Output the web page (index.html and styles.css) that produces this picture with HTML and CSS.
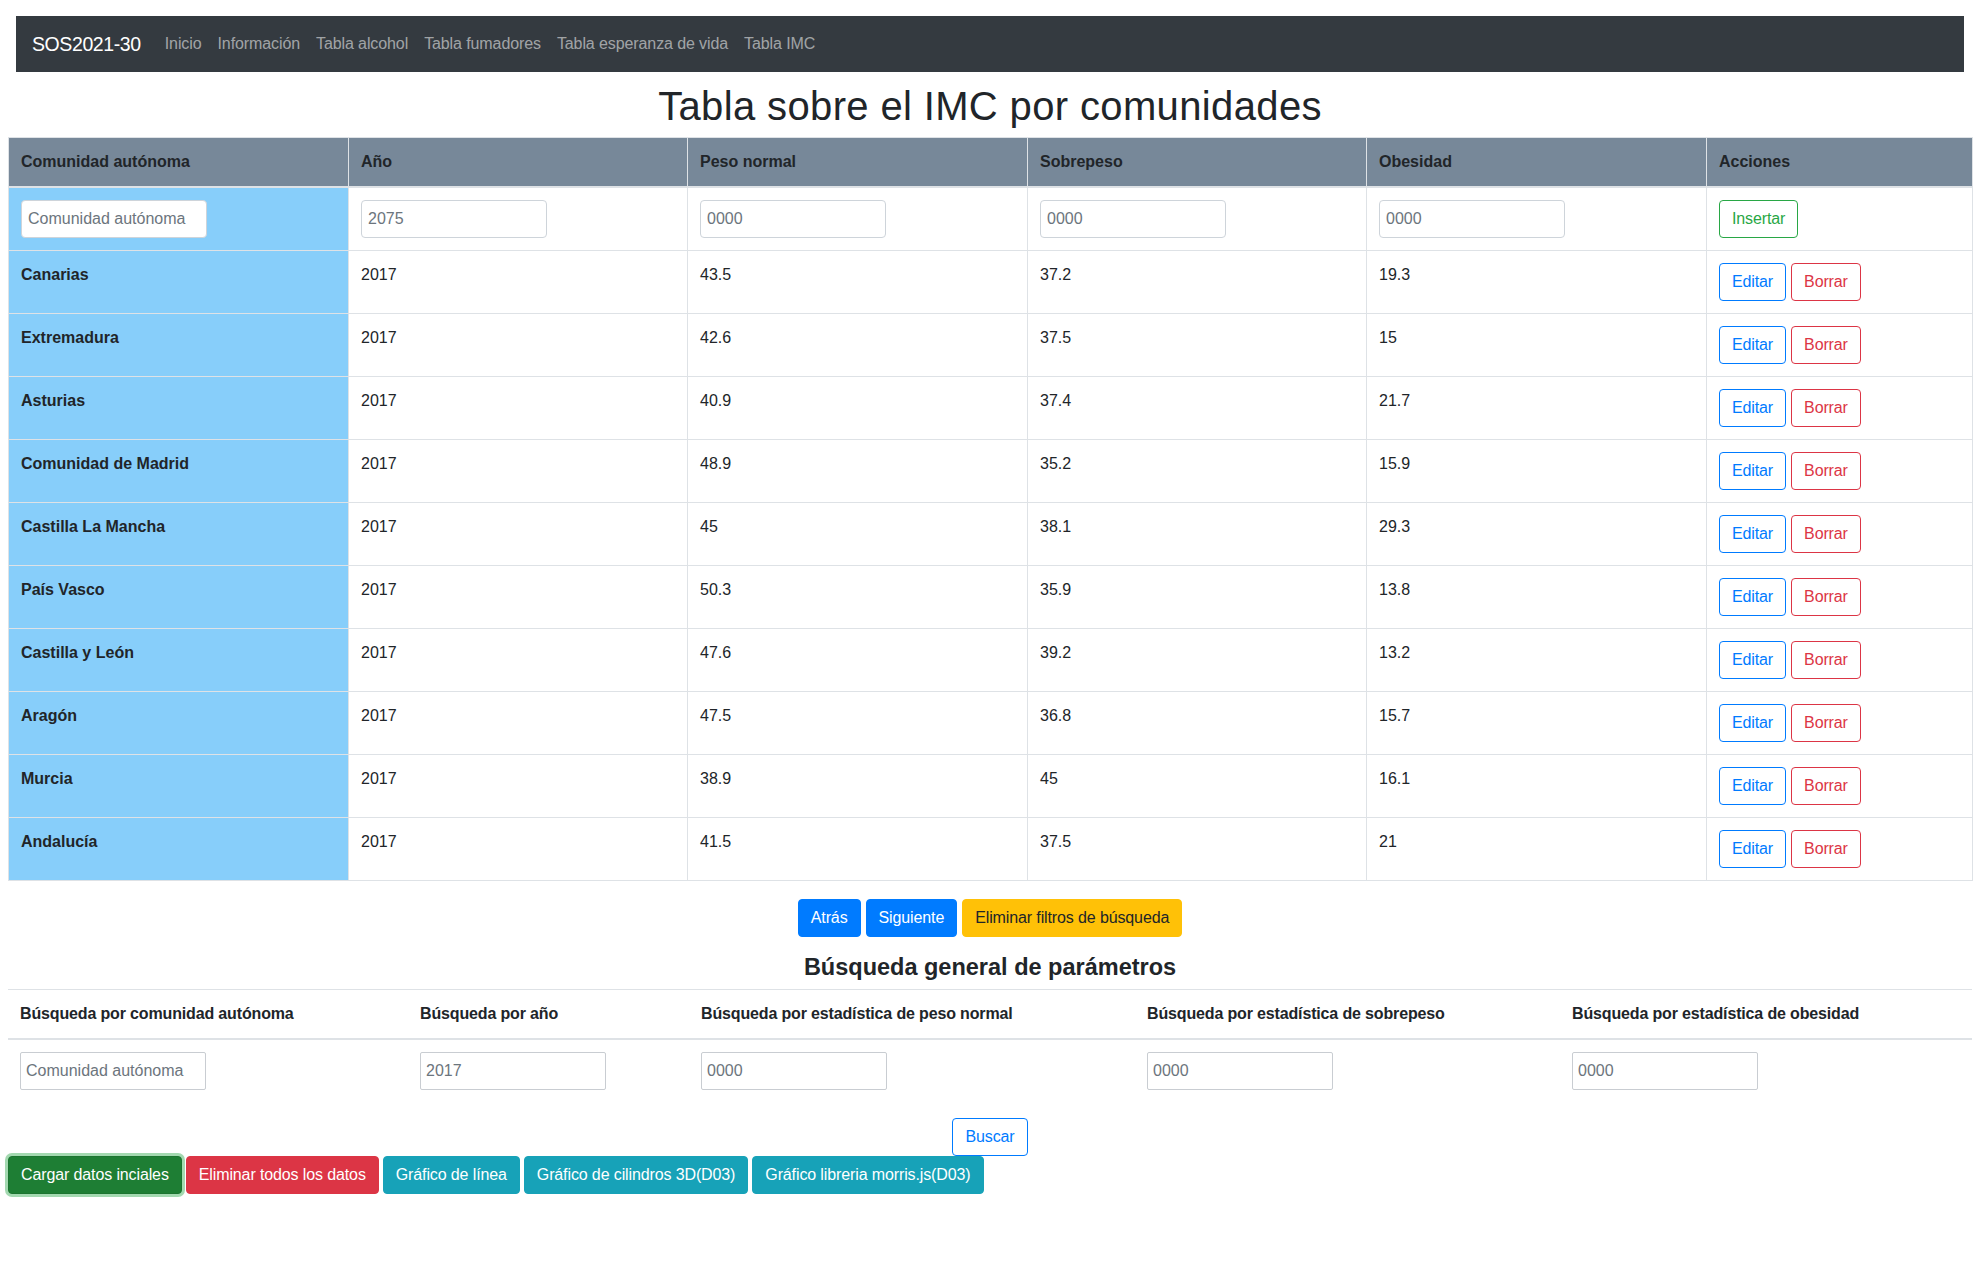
FILE: index.html
```html
<!DOCTYPE html>
<html lang="es">
<head>
<meta charset="utf-8">
<title>SOS2021-30 - Tabla IMC</title>
<link rel="stylesheet" href="styles.css">
</head>
<body>
<nav class="navbar">
  <span class="brand">SOS2021-30</span>
  <ul class="nav-links">
    <li><a class="nav-link" href="#">Inicio</a></li>
    <li><a class="nav-link" href="#">Información</a></li>
    <li><a class="nav-link" href="#">Tabla alcohol</a></li>
    <li><a class="nav-link" href="#">Tabla fumadores</a></li>
    <li><a class="nav-link" href="#">Tabla esperanza de vida</a></li>
    <li><a class="nav-link" href="#">Tabla IMC</a></li>
  </ul>
</nav>

<h1 class="page-title">Tabla sobre el IMC por comunidades</h1>

<table class="data-table">
  <colgroup>
    <col class="c-wide">
    <col class="c-mid">
    <col class="c-wide">
    <col class="c-mid">
    <col class="c-wide">
    <col class="c-act">
  </colgroup>
  <thead>
    <tr>
      <th>Comunidad autónoma</th>
      <th>Año</th>
      <th>Peso normal</th>
      <th>Sobrepeso</th>
      <th>Obesidad</th>
      <th>Acciones</th>
    </tr>
  </thead>
  <tbody>
    <tr>
      <td class="region-cell"><input class="field" type="text" placeholder="Comunidad autónoma"></td>
      <td><input class="field" type="text" placeholder="2075"></td>
      <td><input class="field" type="text" placeholder="0000"></td>
      <td><input class="field" type="text" placeholder="0000"></td>
      <td><input class="field" type="text" placeholder="0000"></td>
      <td><div class="actions"><button class="btn btn-outline-success">Insertar</button></div></td>
    </tr>
    <tr>
      <th class="region-cell">Canarias</th><td>2017</td><td>43.5</td><td>37.2</td><td>19.3</td>
      <td><div class="actions"><button class="btn btn-outline-primary">Editar</button><button class="btn btn-outline-danger">Borrar</button></div></td>
    </tr>
    <tr>
      <th class="region-cell">Extremadura</th><td>2017</td><td>42.6</td><td>37.5</td><td>15</td>
      <td><div class="actions"><button class="btn btn-outline-primary">Editar</button><button class="btn btn-outline-danger">Borrar</button></div></td>
    </tr>
    <tr>
      <th class="region-cell">Asturias</th><td>2017</td><td>40.9</td><td>37.4</td><td>21.7</td>
      <td><div class="actions"><button class="btn btn-outline-primary">Editar</button><button class="btn btn-outline-danger">Borrar</button></div></td>
    </tr>
    <tr>
      <th class="region-cell">Comunidad de Madrid</th><td>2017</td><td>48.9</td><td>35.2</td><td>15.9</td>
      <td><div class="actions"><button class="btn btn-outline-primary">Editar</button><button class="btn btn-outline-danger">Borrar</button></div></td>
    </tr>
    <tr>
      <th class="region-cell">Castilla La Mancha</th><td>2017</td><td>45</td><td>38.1</td><td>29.3</td>
      <td><div class="actions"><button class="btn btn-outline-primary">Editar</button><button class="btn btn-outline-danger">Borrar</button></div></td>
    </tr>
    <tr>
      <th class="region-cell">País Vasco</th><td>2017</td><td>50.3</td><td>35.9</td><td>13.8</td>
      <td><div class="actions"><button class="btn btn-outline-primary">Editar</button><button class="btn btn-outline-danger">Borrar</button></div></td>
    </tr>
    <tr>
      <th class="region-cell">Castilla y León</th><td>2017</td><td>47.6</td><td>39.2</td><td>13.2</td>
      <td><div class="actions"><button class="btn btn-outline-primary">Editar</button><button class="btn btn-outline-danger">Borrar</button></div></td>
    </tr>
    <tr>
      <th class="region-cell">Aragón</th><td>2017</td><td>47.5</td><td>36.8</td><td>15.7</td>
      <td><div class="actions"><button class="btn btn-outline-primary">Editar</button><button class="btn btn-outline-danger">Borrar</button></div></td>
    </tr>
    <tr>
      <th class="region-cell">Murcia</th><td>2017</td><td>38.9</td><td>45</td><td>16.1</td>
      <td><div class="actions"><button class="btn btn-outline-primary">Editar</button><button class="btn btn-outline-danger">Borrar</button></div></td>
    </tr>
    <tr>
      <th class="region-cell">Andalucía</th><td>2017</td><td>41.5</td><td>37.5</td><td>21</td>
      <td><div class="actions"><button class="btn btn-outline-primary">Editar</button><button class="btn btn-outline-danger">Borrar</button></div></td>
    </tr>
  </tbody>
</table>

<div class="pager">
  <button class="btn btn-primary">Atrás</button>
  <button class="btn btn-primary">Siguiente</button>
  <button class="btn btn-warning">Eliminar filtros de búsqueda</button>
</div>

<h4 class="section-title">Búsqueda general de parámetros</h4>

<table class="search-table">
  <colgroup>
    <col class="s1">
    <col class="s2">
    <col class="s3">
    <col class="s4">
    <col class="s5">
  </colgroup>
  <thead>
    <tr>
      <th>Búsqueda por comunidad autónoma</th>
      <th>Búsqueda por año</th>
      <th>Búsqueda por estadística de peso normal</th>
      <th>Búsqueda por estadística de sobrepeso</th>
      <th>Búsqueda por estadística de obesidad</th>
    </tr>
  </thead>
  <tbody>
    <tr>
      <td><input class="field search-field" type="text" placeholder="Comunidad autónoma"></td>
      <td><input class="field search-field" type="text" placeholder="2017"></td>
      <td><input class="field search-field" type="text" placeholder="0000"></td>
      <td><input class="field search-field" type="text" placeholder="0000"></td>
      <td><input class="field search-field" type="text" placeholder="0000"></td>
    </tr>
  </tbody>
</table>

<div class="center-row">
  <button class="btn btn-outline-primary">Buscar</button>
</div>

<div class="bottom-actions">
  <button class="btn btn-success-active">Cargar datos inciales</button>
  <button class="btn btn-danger">Eliminar todos los datos</button>
  <button class="btn btn-info">Gráfico de línea</button>
  <button class="btn btn-info">Gráfico de cilindros 3D(D03)</button>
  <button class="btn btn-info">Gráfico libreria morris.js(D03)</button>
</div>
</body>
</html>
```

FILE: styles.css
```css
* {
  box-sizing: border-box;
}

body {
  margin: 0;
  padding: 8px;
  font-family: "Liberation Sans", Arial, sans-serif;
  font-size: 16px;
  line-height: 1.5;
  color: #212529;
  background: #fff;
}

/* navbar */
.navbar {
  margin: 8px 8px 0;
  height: 56px;
  padding: 8px 16px;
  background: #343a40;
  display: flex;
  align-items: center;
}

.brand {
  color: #fff;
  font-size: 19.5px;
  letter-spacing: -0.4px;
  line-height: 30px;
  padding: 5px 0;
  margin-right: 16px;
}

.nav-links {
  list-style: none;
  margin: 0;
  padding: 0;
  display: flex;
}

.nav-link {
  display: block;
  padding: 8px;
  color: rgba(255, 255, 255, 0.55);
  text-decoration: none;
  letter-spacing: -0.1px;
}

/* title */
.page-title {
  margin: 10px 0 7px;
  text-align: center;
  font-size: 40px;
  letter-spacing: 0.36px;
  font-weight: 400;
  line-height: 48px;
}

/* main table */
.data-table {
  width: 100%;
  table-layout: fixed;
  border-collapse: collapse;
  border: 1px solid #dee2e6;
  margin-bottom: 18px;
}

.c-wide { width: 340px; }
.c-mid { width: 339px; }
.c-act { width: 266px; }

.data-table th,
.data-table td {
  padding: 12px;
  border: 1px solid #dee2e6;
  vertical-align: top;
  text-align: left;
}

.data-table thead th {
  background: #778899;
  font-weight: 700;
  border-bottom: 2px solid #dee2e6;
}

.data-table tbody th {
  font-weight: 700;
}

.region-cell {
  background: #87cefa;
}

.field {
  display: block;
  width: 186px;
  height: 38px;
  padding: 6px 6px;
  font-family: inherit;
  font-size: 16px;
  line-height: 24px;
  color: #495057;
  background: #fff;
  border: 1px solid #ced4da;
  border-radius: 4px;
}

.field::placeholder {
  color: #6c757d;
  opacity: 1;
}

.search-field {
  padding: 6px 5px;
  border-color: #c9cdd2;
  border-radius: 2px;
}

.actions {
  display: flex;
  gap: 5px;
}

/* buttons */
.btn {
  display: inline-block;
  height: 38px;
  padding: 6px 12px;
  font-family: inherit;
  font-size: 16px;
  line-height: 24px;
  letter-spacing: -0.12px;
  border: 1px solid transparent;
  border-radius: 4px;
  background: transparent;
  white-space: nowrap;
  cursor: pointer;
}

.btn-outline-primary {
  color: #007bff;
  border-color: #007bff;
}

.btn-outline-danger {
  color: #dc3545;
  border-color: #dc3545;
}

.btn-outline-success {
  color: #28a745;
  border-color: #28a745;
}

.btn-primary {
  color: #fff;
  background: #007bff;
  border-color: #007bff;
}

.btn-warning {
  color: #212529;
  background: #ffc107;
  border-color: #ffc107;
}

.btn-danger {
  color: #fff;
  background: #dc3545;
  border-color: #dc3545;
}

.btn-info {
  color: #fff;
  background: #17a2b8;
  border-color: #17a2b8;
}

.btn-success-active {
  color: #fff;
  background: #1e7e34;
  border-color: #1c7430;
  box-shadow: 0 0 0 3px rgba(72, 180, 97, 0.5);
}

.pager {
  display: flex;
  justify-content: center;
  gap: 5px;
}

.section-title {
  margin: 16px 0 8px;
  text-align: center;
  font-size: 23.5px;
  font-weight: 700;
  line-height: 1.2;
}

/* search table */
.search-table {
  width: 100%;
  table-layout: fixed;
  border-collapse: collapse;
  margin-bottom: 16px;
}

.s1 { width: 400px; }
.s2 { width: 281px; }
.s3 { width: 446px; }
.s4 { width: 425px; }
.s5 { width: 412px; }

.search-table th,
.search-table td {
  padding: 12px;
  border-top: 1px solid #dee2e6;
  vertical-align: top;
  text-align: left;
}

.search-table thead th {
  font-weight: 700;
  letter-spacing: -0.15px;
  border-bottom: 2px solid #dee2e6;
}

.center-row {
  display: flex;
  justify-content: center;
}

.bottom-actions {
  display: flex;
  gap: 4px;
}
```
